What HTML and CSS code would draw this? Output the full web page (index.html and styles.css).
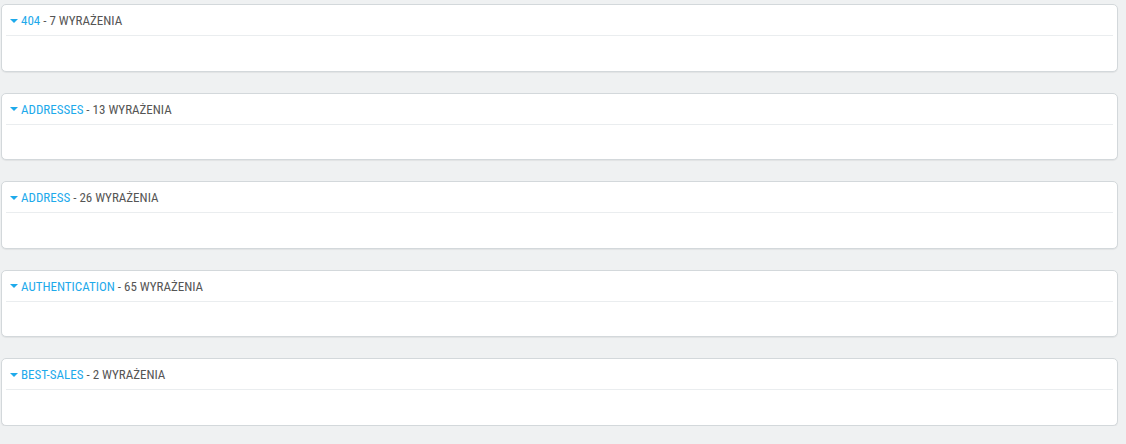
FILE: index.html
```html
<!DOCTYPE html>
<html lang="pl">
<head>
<meta charset="utf-8">
<title>Tłumaczenia</title>
<link rel="stylesheet" href="styles.css">
</head>
<body>
<div class="list">
  <div class="panel">
    <div class="panel-heading"><span class="caret"></span><a class="name" href="#">404</a><span class="count"> - 7 WYRAŻENIA</span></div>
  </div>
  <div class="panel">
    <div class="panel-heading"><span class="caret"></span><a class="name" href="#">ADDRESSES</a><span class="count"> - 13 WYRAŻENIA</span></div>
  </div>
  <div class="panel">
    <div class="panel-heading"><span class="caret"></span><a class="name" href="#">ADDRESS</a><span class="count"> - 26 WYRAŻENIA</span></div>
  </div>
  <div class="panel">
    <div class="panel-heading"><span class="caret"></span><a class="name" href="#">AUTHENTICATION</a><span class="count"> - 65 WYRAŻENIA</span></div>
  </div>
  <div class="panel">
    <div class="panel-heading"><span class="caret"></span><a class="name" href="#">BEST-SALES</a><span class="count"> - 2 WYRAŻENIA</span></div>
  </div>
</div>
</body>
</html>
```
FILE: styles.css
```css
html, body {
  margin: 0;
  padding: 0;
  background: #eff1f2;
}
body {
  font-family: "Roboto Condensed", "Ubuntu Condensed", "DejaVu Sans Condensed", sans-serif;
  color: #555;
}
.list {
  display: flex;
  flex-direction: column;
  gap: 21px;
  padding: 4px 8px 0 1px;
}
.panel {
  box-sizing: border-box;
  height: 67.5px;
  background: #fff;
  border: 1px solid #d3d8db;
  border-radius: 5px;
  box-shadow: 0 1px 1px rgba(0,0,0,0.06);
  padding: 0 4px;
}
.panel-heading {
  display: flex;
  align-items: center;
  height: 31px;
  padding-top: 1px;
  box-sizing: border-box;
  border-bottom: 1px solid #eaedef;
  font-size: 13px;
  text-transform: uppercase;
  white-space: pre;
}
.caret {
  width: 0;
  height: 0;
  border-left: 4px solid transparent;
  border-right: 4px solid transparent;
  border-top: 4px solid #1eaaeb;
  margin: 0 3px 0 4px;
}
.name {
  color: #1eaaeb;
  text-decoration: none;
}
.count {
  color: #555;
}
```
